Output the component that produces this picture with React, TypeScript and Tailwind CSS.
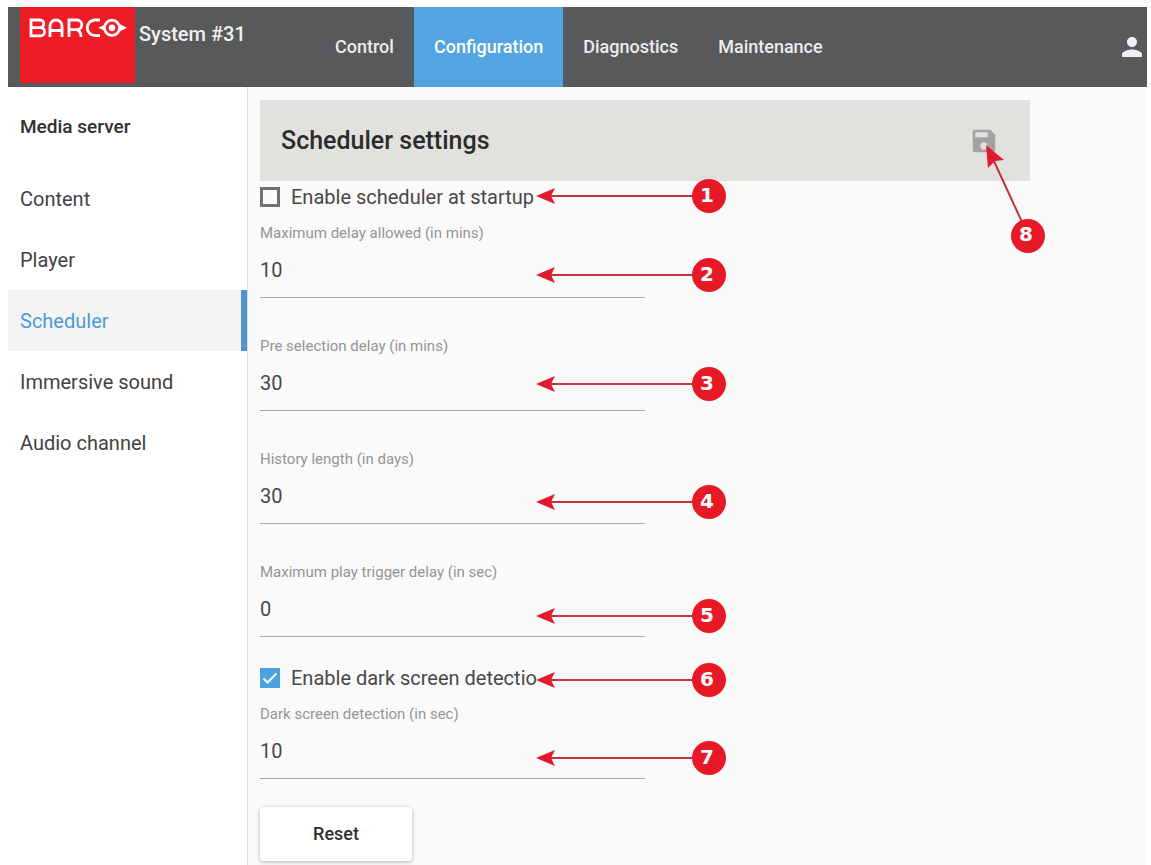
import clsx from "clsx"
import { MdPerson, MdSave } from "react-icons/md"

const tabs = ["Control", "Configuration", "Diagnostics", "Maintenance"]

const menuItems = [
  "Content",
  "Player",
  "Scheduler",
  "Immersive sound",
  "Audio channel",
]

const delayFields = [
  { id: "max-delay", label: "Maximum delay allowed (in mins)", value: "10" },
  { id: "pre-selection", label: "Pre selection delay (in mins)", value: "30" },
  { id: "history", label: "History length (in days)", value: "30" },
  {
    id: "play-trigger",
    label: "Maximum play trigger delay (in sec)",
    value: "0",
  },
]

// vertical centre of each horizontal callout
const callouts = [109, 188, 297, 415, 529, 593, 671]

const Logo = () => (
  <svg
    viewBox="0 0 98 20"
    className="w-[98px] h-5"
    fill="none"
    stroke="white"
    strokeWidth="2.8"
    role="img"
    aria-label="Barco"
  >
    <path d="M2 2h9a3.800 3.800 0 0 1 0 7.600H2h9.500a4 4 0 0 1 0 8.200H2z" />
    <path d="M21 19V8a6 6 0 0 1 12 0v11M21 12.500h12" />
    <path d="M40 19V2h8a4.800 4.800 0 0 1 0 9.600h-8M47 11.600q5 .5 5 7.400" />
    <path d="M71 2h-5a7.800 7.800 0 0 0 0 15.600h5" />
    <circle cx="83" cy="9.800" r="7.600" />
    <circle cx="83" cy="9.800" r="3.400" fill="white" stroke="none" />
    <path d="M69 9.800l7-3v6zM98 9.800l-8-4v8z" fill="white" stroke="none" />
  </svg>
)

const Header = () => (
  <header className="flex h-20 bg-[#58595b] pl-3 text-white">
    <a
      href="#home"
      className="flex h-[76px] w-[115px] shrink-0 justify-center bg-[#ee1c25] pt-[11px]"
    >
      <Logo />
    </a>
    <p className="w-[180px] shrink-0 pl-1 pt-[15px] text-xl leading-6 font-medium text-[#f0f0f0]">
      System #31
    </p>
    <nav className="flex">
      {tabs.map((tab) => (
        <a
          key={tab}
          href={`#${tab.toLowerCase()}`}
          className={clsx(
            "flex items-center px-5 text-lg font-medium",
            tab === "Configuration"
              ? "bg-[#52a5e0] text-white"
              : "text-[#ececec]",
          )}
        >
          {tab}
        </a>
      ))}
    </nav>
    <button aria-label="Account" className="ml-auto">
      <MdPerson className="size-[30px] text-[#eff1f4]" />
    </button>
  </header>
)

const SideMenu = () => (
  <aside className="w-60 shrink-0 border-r border-[#dcdcdc] text-[#424242]">
    <h2 className="flex h-20 items-center pl-3 text-[19px] font-medium text-[#303030]">
      Media server
    </h2>
    <ul className="pt-px">
      {menuItems.map((item) => (
        <li key={item}>
          <a
            href={`#${item.toLowerCase().replace(" ", "-")}`}
            className={clsx(
              "flex h-[61px] items-center pl-3 text-xl",
              item === "Scheduler" &&
                "border-r-[6px] border-[#4f93cf] bg-[#f4f4f4] text-[#4d9bd6]",
            )}
          >
            {item}
          </a>
        </li>
      ))}
    </ul>
  </aside>
)

type FieldProps = { id: string; label: string; value: string }

const Field = ({ id, label, value }: FieldProps) => (
  <div className="flex w-[385px] flex-col pt-2.5">
    <label htmlFor={id} className="h-5 text-[15px] leading-5 text-[#959595]">
      {label}
    </label>
    <input
      id={id}
      defaultValue={value}
      className="h-[55px] border-b border-[#a8a8a8] bg-transparent text-xl text-[#484848] outline-none"
    />
  </div>
)

type CheckProps = { id: string; label: string; checked?: boolean }

const Check = ({ id, label, checked }: CheckProps) => (
  <div className="flex h-8 items-center gap-[11px]">
    <span className="grid size-5 shrink-0">
      <input
        id={id}
        type="checkbox"
        defaultChecked={checked}
        className="peer col-start-1 row-start-1 size-5 appearance-none border-[3px] border-[#707070] checked:border-[#4ba3de] checked:bg-[#4ba3de]"
      />
      <svg
        viewBox="0 0 20 20"
        className="pointer-events-none invisible col-start-1 row-start-1 size-5 peer-checked:visible"
        fill="none"
        stroke="white"
        strokeWidth="2"
      >
        <path d="M3.500 10.500l4 4 9-9" />
      </svg>
    </span>
    <label htmlFor={id} className="text-xl text-[#484848]">
      {label}
    </label>
  </div>
)

const Callouts = () => (
  <svg
    className="pointer-events-none absolute inset-0 size-full font-['DejaVu_Sans',sans-serif] text-[20px] font-bold"
    textAnchor="middle"
  >
    {callouts.map((y, index) => (
      <g key={y}>
        {/* keeps the arrow head clear of the label under it */}
        <path d={`M289 ${y - 12}h23v22h-23z`} fill="#fafafa" />
        <path d={`M300 ${y}H448`} stroke="#c4303f" strokeWidth="2" />
        <path d={`M288 ${y}l19 -8l-4 8l4 8z`} fill="#e01b2c" />
        <circle cx="461" cy={y} r="17" fill="#e71926" />
        <text x="459" y={y + 6} fill="white">
          {index + 1}
        </text>
      </g>
    ))}
    <path d="M745 72L774 135" stroke="#c4303f" strokeWidth="2" />
    <path d="M738 58l18 15l-9 1l-7 7z" fill="#e01b2c" />
    <circle cx="780" cy="149" r="17" fill="#e71926" />
    <text x="778" y="154" fill="white">
      8
    </text>
  </svg>
)

const App = () => {
  return (
    <div className="flex min-h-screen flex-col bg-white pt-[7px] pr-1 pl-2 font-[Roboto,sans-serif]">
      <Header />
      <div className="flex grow">
        <SideMenu />
        <main className="relative grow bg-[#fafafa] pt-[13px] pl-3">
          <div className="mr-[117px] flex h-[81px] items-center justify-between bg-[#e1e2de] pr-[31px] pl-[21px]">
            <h1 className="text-[25px] font-medium text-[#2c2c2c]">
              Scheduler settings
            </h1>
            <button aria-label="Save">
              <MdSave className="size-[30px] text-[#a2a2a2]" />
            </button>
          </div>
          <Check id="startup" label="Enable scheduler at startup" />
          <div className="flex flex-col gap-7">
            {delayFields.map((field) => (
              <Field key={field.id} {...field} />
            ))}
          </div>
          <div className="pt-[25px]">
            <Check
              id="dark-screen"
              label="Enable dark screen detection"
              checked
            />
          </div>
          <Field
            id="dark-screen-delay"
            label="Dark screen detection (in sec)"
            value="10"
          />
          <button className="mt-7 h-[54px] w-[152px] rounded-sm bg-white text-lg font-medium text-[#303030] shadow-[0_1px_4px_rgba(0,0,0,0.3)]">
            Reset
          </button>
          <Callouts />
        </main>
      </div>
    </div>
  )
}

export default App
